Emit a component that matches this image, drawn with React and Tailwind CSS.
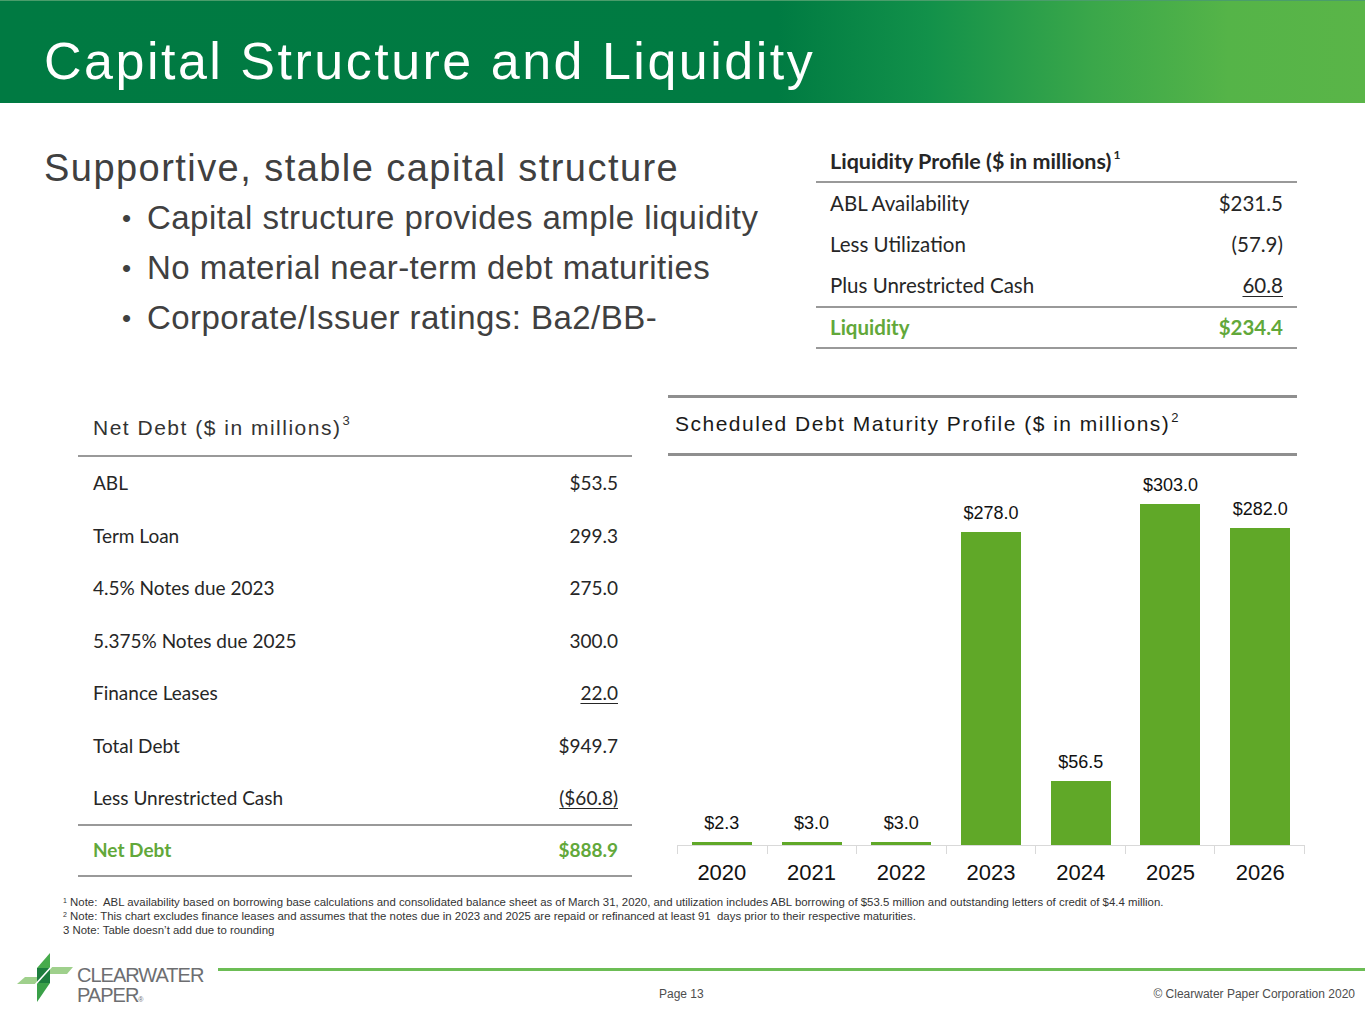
import React from "react";

const liquidity = [
  { label: "ABL Availability", value: "$231.5" },
  { label: "Less Utilization", value: "(57.9)" },
  { label: "Plus Unrestricted Cash", value: "60.8", underline: true, border: true },
];

const netDebt = [
  { label: "ABL", value: "$53.5" },
  { label: "Term Loan", value: "299.3" },
  { label: "4.5% Notes due 2023", value: "275.0" },
  { label: "5.375% Notes due 2025", value: "300.0" },
  { label: "Finance Leases", value: "22.0", underline: true },
  { label: "Total Debt", value: "$949.7" },
];

const bars = [
  { year: "2020", label: "$2.3", v: 2.3 },
  { year: "2021", label: "$3.0", v: 3.0 },
  { year: "2022", label: "$3.0", v: 3.0 },
  { year: "2023", label: "$278.0", v: 278.0 },
  { year: "2024", label: "$56.5", v: 56.5 },
  { year: "2025", label: "$303.0", v: 303.0 },
  { year: "2026", label: "$282.0", v: 282.0 },
];

const bullets = [
  "Capital structure provides ample liquidity",
  "No material near-term debt maturities",
  "Corporate/Issuer ratings: Ba2/BB-",
];

function Logo() {
  return (
    <svg width="58" height="54" viewBox="0 0 58 54" className="shrink-0">
      <polygon points="2,34 10,27 22,27 22,34" fill="#9fd08c" />
      <polygon points="34,17 58,17 52,24 34,24" fill="#9fd08c" />
      <polygon points="22,18 35,3 35,18" fill="#47ab4c" />
      <polygon points="22,33 35,33 22,52" fill="#3aa048" />
      <rect x="22" y="18" width="13" height="15" fill="#1c7d3d" />
      <line x1="19" y1="36" x2="38" y2="15" stroke="#ffffff" strokeWidth="1.6" />
    </svg>
  );
}

export default function App() {
  return (
    <div className="w-[1365px] h-[1024px] bg-white overflow-hidden flex flex-col font-['Liberation_Sans',Arial,sans-serif]">
      {/* Header */}
      <div className="h-[103px] shrink-0 border-t border-[#4a9d6b] bg-[linear-gradient(to_right,#007a42_0%,#007b42_57%,#12914a_68%,#3aa74a_80%,#55b448_90%,#5ab548_100%)] pl-[44px] pt-[34px]">
        <h1 className="text-[52px] leading-none text-white tracking-[2.5px]">Capital Structure and Liquidity</h1>
      </div>

      {/* Top section */}
      <div className="flex shrink-0">
        <div className="w-[816px] pl-[44px] pt-[40px] text-[#404040]">
          <div className="text-[38px] leading-[50px] tracking-[1.45px]">Supportive, stable capital structure</div>
          <ul className="pl-[78px]">
            {bullets.map((b) => (
              <li key={b} className="flex text-[33px] leading-[50px] tracking-[0.45px]">
                <span className="w-[25px] text-[26px]">•</span>
                <span>{b}</span>
              </li>
            ))}
          </ul>
        </div>
        <div className="w-[481px] mt-[38px] font-['Lato',sans-serif] text-[20.5px] text-[#262626]">
          <div className="h-[42px] flex items-center pl-[14px] font-bold text-[21.5px] border-b-2 border-[#999999]">
            Liquidity Profile ($ in millions)<sup className="text-[12px] ml-[2px]">1</sup>
          </div>
          {liquidity.map((r) => (
            <div
              key={r.label}
              className={`flex items-center justify-between px-[14px] ${r.border ? "h-[43px] border-b-2 border-[#999999]" : "h-[41px]"}`}
            >
              <span>{r.label}</span>
              <span className={r.underline ? "underline underline-offset-[3px] decoration-1" : ""}>{r.value}</span>
            </div>
          ))}
          <div className="h-[41px] flex items-center justify-between px-[14px] font-bold text-[#62a83a] border-b-2 border-[#999999]">
            <span>Liquidity</span>
            <span>$234.4</span>
          </div>
        </div>
      </div>

      {/* Middle section */}
      <div className="flex h-[500px] mt-[46px] shrink-0">
        {/* Net debt table */}
        <div className="ml-[78px] w-[554px] mt-[5px] text-[#262626]">
          <div className="h-[57px] flex items-center pl-[15px] text-[21px] tracking-[1.5px] text-[#333333] border-b-2 border-[#999999]">
            Net Debt ($ in millions)<sup className="text-[13px] tracking-normal ml-[1px]">3</sup>
          </div>
          <div className="font-['Lato',sans-serif] text-[19px]">
            {netDebt.map((r) => (
              <div key={r.label} className="h-[52.5px] flex items-center justify-between pl-[15px] pr-[14px]">
                <span>{r.label}</span>
                <span className={r.underline ? "underline underline-offset-[3px] decoration-1" : ""}>{r.value}</span>
              </div>
            ))}
            <div className="h-[54px] flex items-center justify-between pl-[15px] pr-[14px] border-b-2 border-[#999999]">
              <span>Less Unrestricted Cash</span>
              <span className="underline underline-offset-[3px] decoration-1">($60.8)</span>
            </div>
            <div className="h-[51px] flex items-center justify-between pl-[15px] pr-[14px] font-bold text-[#62a83a] border-b-2 border-[#999999]">
              <span>Net Debt</span>
              <span>$888.9</span>
            </div>
          </div>
        </div>

        {/* Chart */}
        <div className="ml-[36px] w-[629px]">
          <div className="h-[61px] flex items-center pl-[7px] pb-[3px] border-t-[3px] border-b-[3px] border-[#8f8f8f] text-[21px] tracking-[1.5px] text-[#1a1a1a]">
            Scheduled Debt Maturity Profile ($ in millions)<sup className="text-[13px] tracking-normal ml-[1px]">2</sup>
          </div>
          <div className="ml-[9px] w-[628px]">
            <div className="h-[389px] flex items-end">
              {bars.map((b) => (
                <div key={b.year} className="flex-1 flex flex-col items-center justify-end">
                  <div className="text-[18px] leading-[22px] mb-[8px] text-[#111111]">{b.label}</div>
                  <div className="w-[60px] bg-[#60a828]" style={{ height: `${b.v * 1.125}px` }} />
                </div>
              ))}
            </div>
            <div className="flex border-t border-[#d9d9d9]">
              {bars.map((b, i) => (
                <div
                  key={b.year}
                  className={`flex-1 h-[8px] border-l border-[#d9d9d9] ${i === bars.length - 1 ? "border-r" : ""}`}
                />
              ))}
            </div>
            <div className="flex mt-[6px]">
              {bars.map((b) => (
                <div key={b.year} className="flex-1 text-center text-[22px] leading-[26px] text-[#111111]">
                  {b.year}
                </div>
              ))}
            </div>
          </div>
        </div>
      </div>

      {/* Footnotes */}
      <div className="pl-[63px] text-[11.4px] leading-[14px] text-[#333333] shrink-0">
        <div>
          <sup className="text-[7px]">1</sup> Note:&nbsp; ABL availability based on borrowing base calculations and consolidated balance sheet as of March 31, 2020, and utilization includes ABL borrowing of $53.5 million and outstanding letters of credit of $4.4 million.
        </div>
        <div>
          <sup className="text-[7px]">2</sup> Note: This chart excludes finance leases and assumes that the notes due in 2023 and 2025 are repaid or refinanced at least 91&nbsp; days prior to their respective maturities.
        </div>
        <div>3 Note: Table doesn’t add due to rounding</div>
      </div>

      {/* Footer */}
      <div className="flex flex-1">
        <div className="w-[218px] shrink-0 pl-[15px] pt-[13px] flex items-start">
          <Logo />
          <div className="ml-[4px] mt-[15px] text-[#6d6e71] text-[20px] leading-[20px] tracking-[-1px]">
            <div>CLEARWATER</div>
            <div>
              PAPER<span className="text-[7px] tracking-normal">®</span>
            </div>
          </div>
        </div>
        <div className="flex-1 flex flex-col">
          <div className="h-[3px] mt-[31px] bg-[#6cbd55]" />
          <div className="flex justify-between pl-[441px] pr-[10px] mt-[15px] text-[12px] leading-[16px] text-[#4d4d4d]">
            <span>Page 13</span>
            <span>© Clearwater Paper Corporation 2020</span>
          </div>
        </div>
      </div>
    </div>
  );
}
